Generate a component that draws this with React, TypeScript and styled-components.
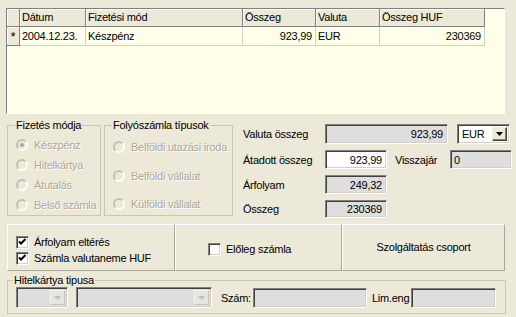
import React from 'react';
import styled, { createGlobalStyle } from 'styled-components';

const GlobalStyle = createGlobalStyle`
  html, body {
    margin: 0;
    padding: 0;
    background: #ece9d8;
  }
  body {
    font-family: "Liberation Sans", Arial, sans-serif;
    font-size: 11px;
    letter-spacing: -0.25px;
    color: #000;
  }
`;

const columns = [
  { title: 'Dátum', width: 66 },
  { title: 'Fizetési mód', width: 157 },
  { title: 'Összeg', width: 73 },
  { title: 'Valuta', width: 64 },
  { title: 'Összeg HUF', width: 105 },
];

const row = [
  { text: '2004.12.23.', right: false },
  { text: 'Készpénz', right: false },
  { text: '923,99', right: true },
  { text: 'EUR', right: false },
  { text: '230369', right: true },
];

const Arrow = ({ color }: { color: string }) => (
  <svg width="7" height="4" viewBox="0 0 7 4">
    <path d="M0 0h7L3.5 4z" fill={color} />
  </svg>
);

const Tick = () => (
  <svg width="9" height="9" viewBox="0 0 9 9">
    <path d="M1 3.5 L3 5.5 L7.5 1" stroke="#000" strokeWidth="2" fill="none" />
  </svg>
);

export default function App() {
  return (
    <Page>
      <GlobalStyle />
      <Grid>
        <Table $cols={columns.map((c) => c.width)}>
          <Corner />
          {columns.map((c) => (
            <HeadCell key={c.title}>{c.title}</HeadCell>
          ))}
          <RowMark>*</RowMark>
          {row.map((c, i) => (
            <Cell key={i} $right={c.right}>
              {c.text}
            </Cell>
          ))}
        </Table>
      </Grid>

      <MiddleRow>
        <Group $w={94} $h={97}>
          <Legend>Fizetés módja</Legend>
          <RadioList $gap={0} $top={3}>
            {['Készpénz', 'Hitelkártya', 'Átutalás', 'Belső számla'].map((t, i) => (
              <RadioRow key={t}>
                <RadioCircle $checked={i === 0} />
                {t}
              </RadioRow>
            ))}
          </RadioList>
        </Group>
        <Group $w={129} $h={97}>
          <Legend>Folyószámla típusok</Legend>
          <RadioList $gap={8.5} $top={5}>
            {['Belföldi utazási iroda', 'Belföldi vállalat', 'Külföldi vállalat'].map((t) => (
              <RadioRow key={t}>
                <RadioCircle $checked={false} />
                {t}
              </RadioRow>
            ))}
          </RadioList>
        </Group>

        <Form>
          <Label>Valuta összeg</Label>
          <Field $bg="#dedede" $w={123} $span>
            923,99
          </Field>
          <Combo $w={53} $active>
            <ComboText>EUR</ComboText>
            <ComboButton $active>
              <Arrow color="#000" />
            </ComboButton>
          </Combo>

          <Label>Átadott összeg</Label>
          <Field $bg="#fff" $w={62}>
            923,99
          </Field>
          <Label $pad={8}>Visszajár</Label>
          <Field $bg="#dedede" $w={62} $left>
            0
          </Field>

          <Label>Árfolyam</Label>
          <Field $bg="#dedede" $w={62}>
            249,32
          </Field>
          <Spacer />

          <Label>Összeg</Label>
          <Field $bg="#dedede" $w={62}>
            230369
          </Field>
          <Spacer />
        </Form>
      </MiddleRow>

      <PanelRow>
        <Panel $w={168}>
          <CheckList>
            <CheckRow>
              <CheckBox>
                <Tick />
              </CheckBox>
              Árfolyam eltérés
            </CheckRow>
            <CheckRow>
              <CheckBox>
                <Tick />
              </CheckBox>
              Számla valutaneme HUF
            </CheckRow>
          </CheckList>
        </Panel>
        <Panel $w={167}>
          <CheckRow $pad={32}>
            <CheckBox />
            Előleg számla
          </CheckRow>
        </Panel>
        <Panel $w={163} $center>
          Szolgáltatás csoport
        </Panel>
      </PanelRow>

      <CardGroup>
        <Legend $shift={-3}>Hitelkártya tipusa</Legend>
        <CardRow>
          <Combo $w={52}>
            <ComboText />
            <ComboButton>
              <Arrow color="#c3c1b6" />
            </ComboButton>
          </Combo>
          <Combo $w={136} $gap={8}>
            <ComboText />
            <ComboButton>
              <Arrow color="#c3c1b6" />
            </ComboButton>
          </Combo>
          <InlineLabel $gap={9}>Szám:</InlineLabel>
          <Field $bg="#dedede" $w={114} $h={20} $gap={2} />
          <InlineLabel $gap={5}>Lim.eng</InlineLabel>
          <Field $bg="#dedede" $w={85} $h={20} $gap={2} />
        </CardRow>
      </CardGroup>
    </Page>
  );
}

const Page = styled.div`
  width: 516px;
  height: 317px;
  box-sizing: border-box;
  padding: 8px 0 0 6px;
  display: flex;
  flex-direction: column;
  overflow: hidden;
`;

const Grid = styled.div`
  width: 499px;
  height: 106px;
  box-sizing: border-box;
  border: 1px solid;
  border-color: #808080 #fff #fff #808080;
  background: #ffffea;
`;

const Table = styled.div<{ $cols: number[] }>`
  display: grid;
  grid-template-columns: 13px ${(p) => p.$cols.map((w) => `${w}px`).join(' ')};
  grid-template-rows: 18px 19px;
`;

const HeadCell = styled.div`
  background: #ece9d8;
  border-right: 1px solid #808080;
  border-bottom: 1px solid #808080;
  box-shadow: inset 1px 1px 0 #fff;
  padding-left: 2px;
  line-height: 17px;
  white-space: nowrap;
  overflow: hidden;
`;

const Corner = styled(HeadCell)`
  padding: 0;
`;

const RowMark = styled.div`
  background: #ece9d8;
  border-right: 1px solid #808080;
  border-bottom: 1px solid #808080;
  box-shadow: inset 1px 1px 0 #fff;
  text-align: center;
  font-size: 13px;
  line-height: 20px;
`;

const Cell = styled.div<{ $right: boolean }>`
  border-right: 1px solid #d4d0c8;
  border-bottom: 1px solid #d4d0c8;
  padding: 0 3px 0 2px;
  line-height: 18px;
  text-align: ${(p) => (p.$right ? 'right' : 'left')};
  white-space: nowrap;
`;

const MiddleRow = styled.div`
  display: flex;
  align-items: flex-start;
  height: 105px;
  margin: 5px 0 0 1px;
`;

const Group = styled.fieldset<{ $w: number; $h: number }>`
  margin: 0 3px 0 0;
  padding: 0 0 0 7px;
  box-sizing: border-box;
  width: ${(p) => p.$w}px;
  height: ${(p) => p.$h}px;
  min-inline-size: 0;
  border: 1px solid #c9c6b8;
`;

const Legend = styled.legend<{ $shift?: number }>`
  padding: 0 1px;
  margin-left: ${(p) => p.$shift ?? 0}px;
  line-height: 13px;
  font-size: 11px;
  white-space: nowrap;
`;

const RadioList = styled.div<{ $gap: number; $top: number }>`
  display: flex;
  flex-direction: column;
  gap: ${(p) => p.$gap}px;
  padding-top: ${(p) => p.$top}px;
`;

const RadioRow = styled.div`
  display: flex;
  align-items: center;
  height: 20px;
  gap: 6px;
  padding-left: 1px;
  color: #aca899;
  text-shadow: 1px 1px 0 #fff;
  white-space: nowrap;
`;

const RadioCircle = styled.span<{ $checked: boolean }>`
  flex: none;
  width: 12px;
  height: 12px;
  box-sizing: border-box;
  border-radius: 50%;
  border: 2px solid;
  border-color: #c3c0b1 #fff #fff #c3c0b1;
  display: flex;
  align-items: center;
  justify-content: center;
  &::after {
    content: '';
    display: ${(p) => (p.$checked ? 'block' : 'none')};
    width: 4px;
    height: 4px;
    border-radius: 50%;
    background: #aca899;
  }
`;

const Form = styled.div`
  margin: 5px 0 0 7px;
  display: grid;
  grid-template-columns: 82px 62px 63px 62px;
  grid-template-rows: 20px 19px 19px 18px;
  row-gap: 6px;
  align-items: center;
`;

const Label = styled.div<{ $pad?: number }>`
  padding-left: ${(p) => p.$pad ?? 0}px;
  white-space: nowrap;
`;

const Spacer = styled.div`
  grid-column: 3 / 5;
`;

const Field = styled.div<{
  $bg: string;
  $w: number;
  $h?: number;
  $span?: boolean;
  $left?: boolean;
  $gap?: number;
}>`
  grid-column: ${(p) => (p.$span ? '2 / 4' : 'auto')};
  flex: none;
  width: ${(p) => p.$w}px;
  height: ${(p) => (p.$h ? `${p.$h}px` : '100%')};
  margin-left: ${(p) => p.$gap ?? 0}px;
  box-sizing: border-box;
  border: 1px solid;
  border-color: #808080 #fff #fff #808080;
  box-shadow: inset 1px 1px 0 #404040, inset -1px -1px 0 #d4d0c8;
  background: ${(p) => p.$bg};
  padding: 0 4px 0 3px;
  text-align: ${(p) => (p.$left ? 'left' : 'right')};
  display: flex;
  align-items: center;
  justify-content: ${(p) => (p.$left ? 'flex-start' : 'flex-end')};
`;

const Combo = styled.div<{ $w: number; $active?: boolean; $gap?: number }>`
  flex: none;
  width: ${(p) => p.$w}px;
  height: ${(p) => (p.$active ? 20 : 21)}px;
  margin-left: ${(p) => (p.$active ? 7 : p.$gap ?? 0)}px;
  box-sizing: border-box;
  border: 1px solid;
  border-color: #808080 #fff #fff #808080;
  box-shadow: inset 1px 1px 0 #404040, inset -1px -1px 0 #d4d0c8;
  background: ${(p) => (p.$active ? '#fff' : '#dedede')};
  padding: 2px;
  display: flex;
  align-items: stretch;
`;

const ComboText = styled.div`
  flex: 1;
  padding-left: 2px;
  display: flex;
  align-items: center;
`;

const ComboButton = styled.div<{ $active?: boolean }>`
  flex: none;
  width: 15px;
  box-sizing: border-box;
  background: ${(p) => (p.$active ? '#ece9d8' : '#e6e5df')};
  border: 1px solid;
  border-color: ${(p) =>
    p.$active ? '#f1efe2 #404040 #404040 #f1efe2' : '#f4f3ee #c9c7bd #c9c7bd #f4f3ee'};
  box-shadow: ${(p) => (p.$active ? 'inset -1px -1px 0 #808080' : 'none')};
  display: flex;
  align-items: center;
  justify-content: center;
`;

const PanelRow = styled.div`
  display: flex;
  height: 47px;
  margin-left: 1px;
`;

const Panel = styled.div<{ $w: number; $center?: boolean }>`
  width: ${(p) => p.$w}px;
  box-sizing: border-box;
  border: 1px solid;
  border-color: #fff #aca899 #aca899 #fff;
  display: flex;
  align-items: center;
  justify-content: ${(p) => (p.$center ? 'center' : 'flex-start')};
  padding-bottom: ${(p) => (p.$center ? 1 : 0)}px;
`;

const CheckList = styled.div`
  display: flex;
  flex-direction: column;
  align-self: flex-start;
  padding: 9px 0 0 8px;
`;

const CheckRow = styled.div<{ $pad?: number }>`
  display: flex;
  align-items: center;
  gap: 5px;
  height: 16px;
  padding-left: ${(p) => p.$pad ?? 0}px;
  padding-top: ${(p) => (p.$pad ? 3 : 0)}px;
  white-space: nowrap;
`;

const CheckBox = styled.span`
  flex: none;
  width: 13px;
  height: 13px;
  box-sizing: border-box;
  border: 1px solid;
  border-color: #808080 #fff #fff #808080;
  box-shadow: inset 1px 1px 0 #404040, inset -1px -1px 0 #d4d0c8;
  background: #fff;
  display: flex;
  align-items: center;
  justify-content: center;
`;

const CardGroup = styled.fieldset`
  margin: 3px 0 0 1px;
  padding: 0 0 0 8px;
  width: 499px;
  height: 40px;
  box-sizing: border-box;
  min-inline-size: 0;
  border: 1px solid #c9c6b8;
`;

const CardRow = styled.div`
  display: flex;
  align-items: center;
  height: 21px;
`;

const InlineLabel = styled.div<{ $gap: number }>`
  margin-left: ${(p) => p.$gap}px;
  white-space: nowrap;
`;
